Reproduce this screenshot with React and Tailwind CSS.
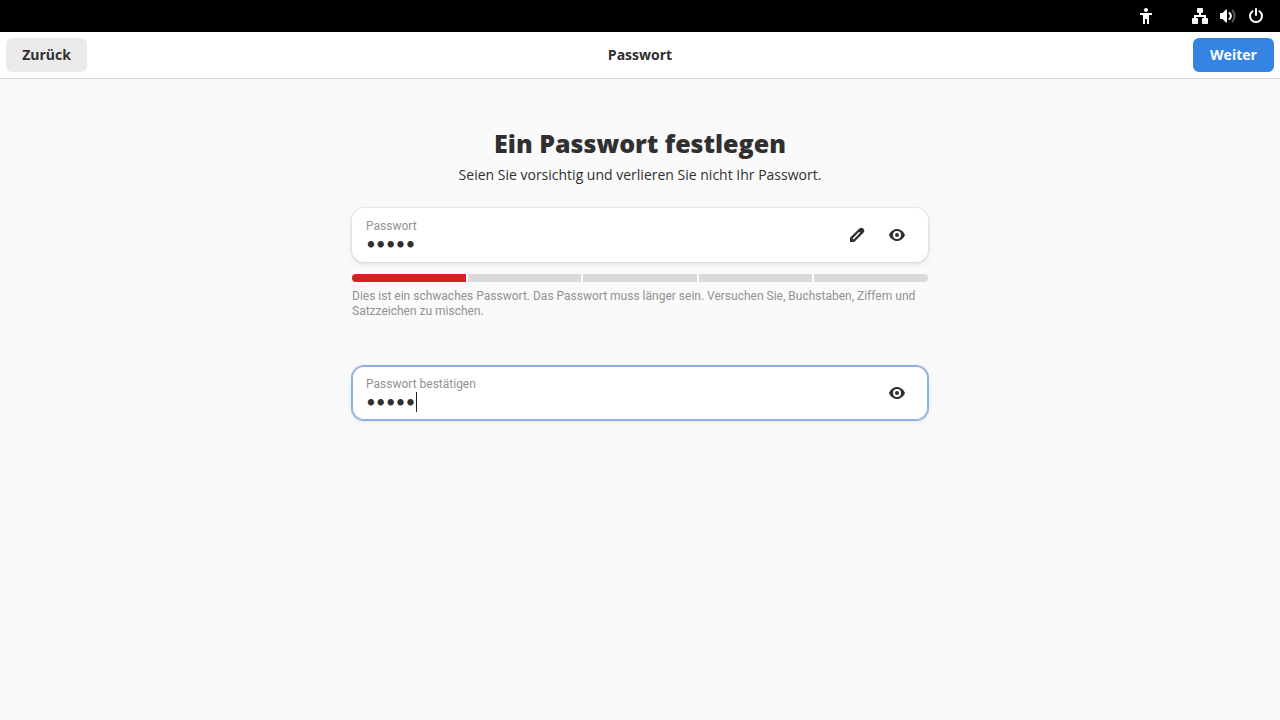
import { useState } from 'react';

const EyeIcon = () => (
  <svg width="16" height="16" viewBox="0 0 16 16" fill="currentColor" fillRule="evenodd" aria-hidden="true">
    <path d="M8 2C4.600 2 1.400 4.400 0 8c1.400 3.600 4.600 6 8 6s6.600-2.400 8-6c-1.400-3.600-4.600-6-8-6zm0 2a4 4 0 1 1 0 8 4 4 0 0 1 0-8z" />
    <circle cx="8" cy="8" r="2" />
  </svg>
);

const PencilIcon = () => (
  <svg width="16" height="16" viewBox="0 0 16 16" fill="currentColor" fillRule="evenodd" aria-hidden="true">
    <path d="M1 15v-4.200L10.300 1.600a2.900 2.900 0 0 1 4.100 4.100L5.200 15zM3.600 11.400l1 1 6.600-6.600-1-1z" />
  </svg>
);

const AccessibilityIcon = () => (
  <svg width="16" height="16" viewBox="0 0 16 16" fill="currentColor" aria-hidden="true">
    <circle cx="8" cy="2" r="2" />
    <path d="M2 5h12v2h-3v9H9v-5H7v5H5V7H2z" />
  </svg>
);

const NetworkIcon = () => (
  <svg width="16" height="16" viewBox="0 0 16 16" fill="currentColor" aria-hidden="true">
    <path d="M6 0h4a1 1 0 0 1 1 1v3a1 1 0 0 1-1 1H9v2h5v3h1a1 1 0 0 1 1 1v4a1 1 0 0 1-1 1h-4a1 1 0 0 1-1-1v-4a1 1 0 0 1 1-1h1V9H4v1h1a1 1 0 0 1 1 1v4a1 1 0 0 1-1 1H1a1 1 0 0 1-1-1v-4a1 1 0 0 1 1-1h1V7h5V5H6a1 1 0 0 1-1-1V1a1 1 0 0 1 1-1z" />
  </svg>
);

const VolumeIcon = () => (
  <svg width="16" height="16" viewBox="0 0 16 16" fill="none" aria-hidden="true">
    <path d="M0 5h2.500L6 1.500h1v13H6L2.500 11H0z" fill="currentColor" />
    <path d="M9.500 5a4.500 4.500 0 0 1 0 6" stroke="currentColor" strokeWidth="2" strokeLinecap="round" />
    <path d="M12.500 2.500a8.500 8.500 0 0 1 0 11" stroke="currentColor" strokeWidth="2" strokeLinecap="round" opacity="0.35" />
  </svg>
);

const PowerIcon = () => (
  <svg width="16" height="16" viewBox="0 0 16 16" fill="none" stroke="currentColor" strokeWidth="2" strokeLinecap="round" aria-hidden="true">
    <path d="M4.500 3.200a6 6 0 1 0 7 0M8 1v6" />
  </svg>
);

const PasswordRow = ({ id, label, value, onChange, active, children }) => (
  <div
    className={`flex items-center h-[54px] px-3.5 bg-white rounded-xl ${
      active
        ? 'ring-1 inset-ring-1 ring-[#8aaee0] inset-ring-[#8aaee0] shadow-[0_1px_4px_2px_rgba(0,0,0,0.05)]'
        : 'shadow-[0_0_0_1px_rgba(0,0,0,0.04),0_1px_3px_1px_rgba(0,0,0,0.07),0_2px_6px_2px_rgba(0,0,0,0.03)]'
    }`}
  >
    <div className="relative flex flex-col grow pt-0.5">
      <label htmlFor={id} className="font-[Roboto,sans-serif] text-xs leading-4 text-[#929292]">{label}</label>
      <input
        id={id}
        type="password"
        value={value}
        onChange={(e) => onChange(e.target.value)}
        className="h-5 w-full bg-transparent font-[Lato,sans-serif] text-[17px] leading-5 caret-transparent outline-none"
      />
      {active && <span className="absolute bottom-0 left-[50px] w-px h-5 bg-[#1e1e1e]" />}
    </div>
    <div className="flex gap-1.5">{children}</div>
  </div>
);

const IconButton = ({ label, children }) => (
  <button type="button" aria-label={label} className="flex items-center justify-center size-[34px] rounded-md hover:bg-black/5">
    {children}
  </button>
);

const StrengthBar = ({ level }) => (
  <div className="flex gap-0.5 h-2 mt-3 rounded-full overflow-hidden">
    {[1, 2, 3, 4, 5].map((step) => (
      <div key={step} className={`grow ${step <= level ? 'bg-[#e01b24]' : 'bg-[#dadada]'}`} />
    ))}
  </div>
);

const App = () => {
  const [password, setPassword] = useState('geeko');
  const [confirm, setConfirm] = useState('geeko');

  return (
    <div className="min-h-screen bg-[#fafafa] text-[#303030] font-['Open_Sans',sans-serif]">
      {/* System bar */}
      <div className="flex items-center justify-end h-8 pr-4 gap-3 bg-black text-white">
        <button type="button" aria-label="Barrierefreiheit" className="mr-[26px]"><AccessibilityIcon /></button>
        <button type="button" aria-label="Netzwerk"><NetworkIcon /></button>
        <button type="button" aria-label="Lautstärke"><VolumeIcon /></button>
        <button type="button" aria-label="Ausschalten"><PowerIcon /></button>
      </div>

      <header className="grid grid-cols-3 items-center h-[47px] px-1.5 bg-white border-b border-[#dadada] text-sm font-bold">
        <button type="button" className="justify-self-start w-[81px] h-[34px] rounded-md bg-[#ebebeb]">Zurück</button>
        <span className="text-center">Passwort</span>
        <button type="button" className="justify-self-end w-[81px] h-[34px] rounded-md bg-[#3584e4] text-white">Weiter</button>
      </header>

      <main className="max-w-xl mx-auto pt-12">
        <h1 className="text-center text-[25px] leading-8 font-black">Ein Passwort festlegen</h1>
        <p className="mt-1.5 text-center text-sm leading-5">Seien Sie vorsichtig und verlieren Sie nicht Ihr Passwort.</p>

        <form className="mt-[23px]">
          <PasswordRow id="password" label="Passwort" value={password} onChange={setPassword}>
            <IconButton label="Passwort erzeugen"><PencilIcon /></IconButton>
            <IconButton label="Passwort anzeigen"><EyeIcon /></IconButton>
          </PasswordRow>
          <StrengthBar level={1} />
          <p className="min-h-[77px] mt-[7px] font-[Roboto,sans-serif] text-xs leading-[15px] text-[#929292]">
            Dies ist ein schwaches Passwort. Das Passwort muss länger sein. Versuchen Sie, Buchstaben, Ziffern und Satzzeichen zu mischen.
          </p>
          <PasswordRow id="confirm" label="Passwort bestätigen" value={confirm} onChange={setConfirm} active>
            <IconButton label="Bestätigung anzeigen"><EyeIcon /></IconButton>
          </PasswordRow>
        </form>
      </main>
    </div>
  );
};

export default App;
